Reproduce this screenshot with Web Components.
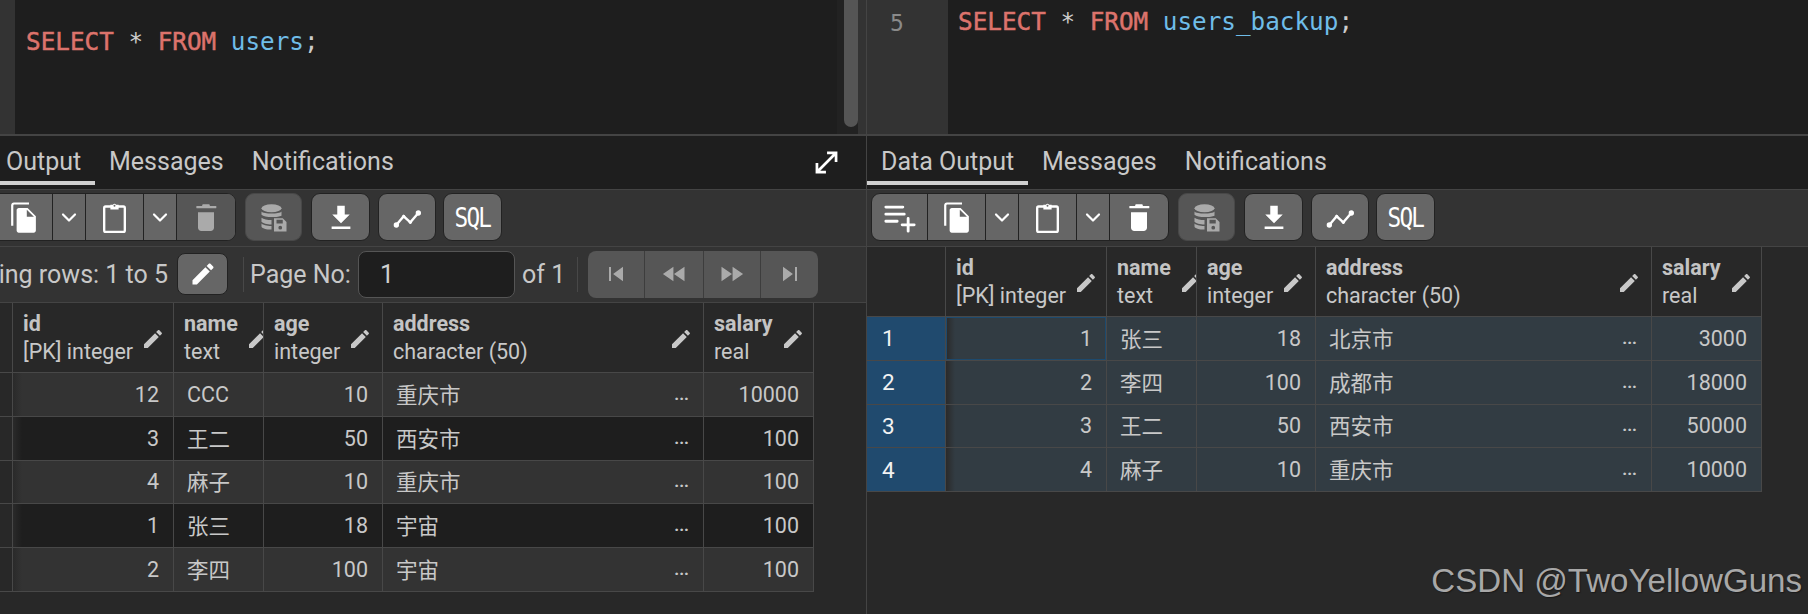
<!DOCTYPE html>
<html>
<head>
<meta charset="utf-8">
<style>
    html, body { margin: 0; padding: 0; height: 100%; background: #282828; overflow: hidden; }
    body { display: flex; font-family: Roboto, "Noto Sans CJK SC", sans-serif; color: #c8c8c8; }
</style>
</head>
<body>
<sql-panel id="left" style="--offset:-66px; width:866px">
    <sql-editor slot="editor" gutter="15" pad="11" top="26" scroller><span class="k">SELECT</span> * <span class="k">FROM</span> <span class="t">users</span>;</sql-editor>
    <result-tabs expand></result-tabs>
    <grid-toolbar></grid-toolbar>
    <pager-bar></pager-bar>
    <data-grid id="leftGrid"></data-grid>
</sql-panel>
<sql-panel id="right" style="--offset:0px; flex:1; border-left:1px solid #444">
    <sql-editor slot="editor" gutter="81" pad="10" top="6" line="5"><span class="k">SELECT</span> * <span class="k">FROM</span> <span class="t">users_backup</span>;</sql-editor>
    <result-tabs></result-tabs>
    <grid-toolbar></grid-toolbar>
    <data-grid id="rightGrid" selected></data-grid>
</sql-panel>
<water-mark>CSDN @TwoYellowGuns</water-mark>

<script>
const ICONS = {
    edit: '<path fill="currentColor" d="M3 17.25V21h3.75L17.81 9.94l-3.75-3.75L3 17.25zM20.71 7.04c.39-.39.39-1.02 0-1.41l-2.34-2.34c-.39-.39-1.02-.39-1.41 0l-1.83 1.83 3.75 3.75 1.83-1.83z"/>',
    addrow: '<g fill="none" stroke="currentColor" stroke-width="2" stroke-linecap="round"><path d="M2 5h12M2 10h13M2 15h8M13.5 17.5h8.5M17.75 13v9"/></g>',
    copy: '<path fill="currentColor" d="M16 1H5C3.9 1 3 1.9 3 3v15h1.6V3.2c0-.3.3-.6.6-.6H16V1zm-1 4l6 6v10.5c0 .9-.7 1.6-1.6 1.6H8.6C7.7 23.100 7 22.400 7 21.500V6.600C7 5.700 7.700 5 8.600 5H15zm-.6 1.400V11.500h5.200L14.400 6.400z"/>',
    paste: '<g fill="none" stroke="currentColor" stroke-width="1.700" stroke-linejoin="round"><rect x="4.500" y="4" width="15" height="18.500" rx="1"/></g><path fill="currentColor" d="M9 2.800h1.900a1.200 1.200 0 0 1 2.200 0H15v3.400H9z"/><circle cx="12" cy="3.500" r=".7" fill="#666"/>',
    chevron: '<path fill="none" stroke="currentColor" stroke-width="2.200" stroke-linecap="round" stroke-linejoin="round" d="M6 9.500l6 6 6-6"/>',
    trash: '<path fill="currentColor" d="M6 8.500h12V20c0 1.400-1.100 2.500-2.500 2.500h-7C7.100 22.500 6 21.400 6 20V8.500zM9.500 2.500h5l.5 1.300h4.500c.3 0 .5.900.1 1.700H4.900c-.3-.8-.2-1.700.1-1.700H9z"/>',
    dbsave: '<g fill="currentColor"><ellipse cx="10" cy="5" rx="8" ry="3.200"/><path d="M2 7.500c1.500 2.300 14.500 2.300 16 0V11c-2 .6-3.800 1-5.500 1-5 .3-9-.5-10.500-1.800zM2 12.500c1.500 1.200 5 1.900 8 1.900V18c-3.500-.1-7-1-8-2.200zM2 17.200c1 1 4 1.900 8 2v2.800c-4 0-8-1-8-2.500z"/><path fill-rule="evenodd" d="M12 13h7l3 3v7.500H12zM14 14.200v3h5v-3zM17 19a1.500 1.500 0 1 0 0 3 1.500 1.500 0 0 0 0-3z"/></g>',
    download: '<path fill="currentColor" d="M19 10h-4V3H9v7H5l7 7 7-7zM4.500 19.500v2h15v-2z"/>',
    graph: '<g fill="none" stroke="currentColor" stroke-width="1.800"><path d="M4 18l5.500-6.500 5 4.500 6-7"/></g><g fill="currentColor"><circle cx="4" cy="18" r="2"/><circle cx="9.500" cy="11.500" r="1.200"/><circle cx="14.500" cy="16" r="1.200"/><circle cx="20.500" cy="9" r="2"/></g>',
    first: '<path fill="currentColor" d="M6 6h1.700v12H6zm3.500 6l8.500 6.200V5.800z"/>',
    prev: '<path fill="currentColor" d="M11.500 18.200V5.800L2.500 12zm.5-6.200l9 6.200V5.800z"/>',
    next: '<path fill="currentColor" d="M3 18.200L12 12 3 5.800zm9.500-12.400v12.400l9-6.200z"/>',
    last: '<path fill="currentColor" d="M6 18.200L14.500 12 6 5.800zM16.300 6v12H18V6z"/>',
    expand: '<g fill="none" stroke="currentColor" stroke-width="2.400"><path d="M4.500 19.500l15-15M12.500 3.500h8v8M3.500 12.500v8h8"/></g>'
};

class PgIcon extends HTMLElement {
    constructor() {
        super();
        this.attachShadow({ mode: "open" });
    }
    connectedCallback() {
        const size = this.getAttribute("size") || 24;
        this.shadowRoot.innerHTML = `
            <style>
                :host { display: inline-flex; flex: none; width: ${size}px; height: ${size}px; }
                svg { width: 100%; height: 100%; display: block; }
            </style>
            <svg viewBox="0 0 24 24">${ICONS[this.getAttribute("name")]}</svg>`;
    }
}
customElements.define("pg-icon", PgIcon);

class SqlPanel extends HTMLElement {
    constructor() {
        super();
        this.attachShadow({ mode: "open" }).innerHTML = `
            <style>
                :host { display: flex; flex-direction: column; height: 100%; overflow: hidden; background: #282828; min-width: 0; box-sizing: content-box; }
                .inner { display: flex; flex-direction: column; margin-left: var(--offset); flex: 1; min-height: 0; }
            </style>
            <slot name="editor"></slot>
            <div class="inner"><slot></slot></div>`;
    }
}
customElements.define("sql-panel", SqlPanel);

class SqlEditor extends HTMLElement {
    constructor() {
        super();
        this.attachShadow({ mode: "open" });
    }
    connectedCallback() {
        const gutter = this.getAttribute("gutter");
        const line = this.getAttribute("line");
        const top = this.getAttribute("top");
        this.shadowRoot.innerHTML = `
            <style>
                :host { display: flex; height: 134px; border-bottom: 2px solid #444; background: #1e1e1e; flex: none; }
                .gutter { width: ${gutter}px; background: #333; flex: none; box-sizing: border-box; padding: ${top}px 0 0 ${line ? 23 : 0}px; color: #8a8a8a;
                    font: 23px/34px "DejaVu Sans Mono", monospace; }
                .code { flex: 1; padding: ${top - 1}px 0 0 ${this.getAttribute("pad")}px; font: 24.300px/34px "DejaVu Sans Mono", monospace; color: #ccc; white-space: pre; }
                ::slotted(.k) { color: #dc736c; -webkit-text-stroke: .5px #dc736c; }
                ::slotted(.t) { color: #6fbce8; }
                .track { width: 21px; background: #222; flex: none; position: relative; }
                .thumb { position: absolute; left: 7px; right: 0; top: 0; height: 127px; background: #555; border-radius: 0 0 7px 7px; }
                .side { width: 8px; background: #333; flex: none; }
            </style>
            <div class="gutter">${line || ""}</div>
            <div class="code"><slot></slot></div>
            ${this.hasAttribute("scroller") ? '<div class="track"><div class="thumb"></div></div><div class="side"></div>' : ""}`;
    }
}
customElements.define("sql-editor", SqlEditor);

class ResultTabs extends HTMLElement {
    constructor() {
        super();
        this.attachShadow({ mode: "open" });
    }
    connectedCallback() {
        this.shadowRoot.innerHTML = `
            <style>
                :host { display: flex; height: 54px; background: #1e1e1e; border-bottom: 1px solid #444; box-sizing: border-box; flex: none; color: #c8c8c8; font: 25px Roboto, sans-serif; padding-right: 26px; align-items: flex-start; }
                .tab { display: flex; align-items: center; padding: 6px 14px 0; height: 49px; box-sizing: border-box; border-bottom: 4px solid transparent; white-space: nowrap; flex: none; }
                .on { border-bottom-color: #d0d0d0; width: 161px; }
                pg-icon { margin: 13px 0 0 auto; color: #fff; }
            </style>
            <div class="tab on">Data Output</div>
            <div class="tab">Messages</div>
            <div class="tab">Notifications</div>
            ${this.hasAttribute("expand") ? '<pg-icon name="expand" size="27"></pg-icon>' : ""}`;
    }
}
customElements.define("result-tabs", ResultTabs);

class GridToolbar extends HTMLElement {
    constructor() {
        super();
        this.attachShadow({ mode: "open" }).innerHTML = `
            <style>
                :host { display: flex; height: 57px; box-sizing: border-box; padding: 3px 0 0 4px; background: #333; border-bottom: 1px solid #444; gap: 8px; flex: none; align-items: flex-start; }
                .group { display: flex; height: 48px; box-sizing: border-box; border: 1px solid #222; border-radius: 9px; overflow: hidden; background: #666; color: #fff; }
                .cell { height: 100%; display: flex; align-items: center; justify-content: center; box-sizing: border-box; border-right: 1px solid #222; }
                .cell:last-child { border-right: 0; }
                .off { background: #565656; border-color: #484848; color: #aaa; }
                .sql { font: 27px "DejaVu Sans Mono", monospace; letter-spacing: -2px; transform: scaleX(.84); }
            </style>
            <div class="group">
                <div class="cell" style="width:56px"><pg-icon name="addrow" size="34"></pg-icon></div>
                <div class="cell" style="width:58px"><pg-icon name="copy" size="33"></pg-icon></div>
                <div class="cell" style="width:33px"><pg-icon name="chevron" size="24"></pg-icon></div>
                <div class="cell" style="width:58px"><pg-icon name="paste" size="33"></pg-icon></div>
                <div class="cell" style="width:33px"><pg-icon name="chevron" size="24"></pg-icon></div>
                <div class="cell" style="width:58px"><pg-icon name="trash" size="32"></pg-icon></div>
            </div>
            <div class="group off" style="margin-left:1px"><div class="cell" style="width:55px"><pg-icon name="dbsave" size="30"></pg-icon></div></div>
            <div class="group" style="margin-left:1px"><div class="cell" style="width:57px"><pg-icon name="download" size="30"></pg-icon></div></div>
            <div class="group"><div class="cell" style="width:56px"><pg-icon name="graph" size="32"></pg-icon></div></div>
            <div class="group" style="margin-left:-1px"><div class="cell" style="width:57px"><span class="sql">SQL</span></div></div>`;
    }
    connectedCallback() {
        // left panel has nothing to delete yet, its bin is greyed out
        if (this.parentElement.id === "left") {
            const bin = this.shadowRoot.querySelector('pg-icon[name="trash"]').parentElement;
            bin.style.background = "#565656";
            bin.style.color = "#aaa";
        }
    }
}
customElements.define("grid-toolbar", GridToolbar);

class PagerBar extends HTMLElement {
    constructor() {
        super();
        this.attachShadow({ mode: "open" }).innerHTML = `
            <style>
                :host { display: flex; align-items: center; height: 56px; box-sizing: border-box; background: #333; border-bottom: 1px solid #444; flex: none; font: 25px Roboto, sans-serif; color: #c8c8c8; padding-left: 66px; padding-bottom: 1px; }
                .rows { width: 168px; display: flex; justify-content: flex-end; overflow: hidden; white-space: nowrap; flex: none; }
                .edit { width: 51px; height: 42px; margin-left: 9px; box-sizing: border-box; background: #666; border: 1px solid #222; border-radius: 8px; display: flex; align-items: center; justify-content: center; color: #fff; flex: none; }
                .sep { width: 1px; height: 35px; background: #484848; flex: none; }
                .page { width: 100px; flex: none; white-space: nowrap; }
                .input { width: 157px; height: 47px; margin: 0 8px; box-sizing: border-box; border: 1px solid #555; border-radius: 8px; background: #1e1e1e; padding-left: 21px; display: flex; align-items: center; color: #d0d0d0; flex: none; }
                .of { width: 40px; flex: none; white-space: nowrap; margin-left: -1px; }
                .nav { display: flex; height: 47px; border-radius: 8px; overflow: hidden; background: #565656; color: #aaa; margin-left: 10px; }
                .nav div { display: flex; align-items: center; justify-content: center; border-right: 1px solid #3d3d3d; box-sizing: border-box; }
                .nav div:last-child { border-right: 0; }
            </style>
            <div class="rows">Showing rows: 1 to 5</div>
            <div class="edit"><pg-icon name="edit" size="28"></pg-icon></div>
            <div class="sep" style="margin:0 6px 0 15px"></div>
            <span class="page">Page No:</span>
            <div class="input">1</div>
            <span class="of">of 1</span>
            <div class="sep" style="margin-left:15px"></div>
            <div class="nav">
                <div style="width:57px"><pg-icon name="first" size="28"></pg-icon></div>
                <div style="width:59px"><pg-icon name="prev" size="28"></pg-icon></div>
                <div style="width:57px"><pg-icon name="next" size="28"></pg-icon></div>
                <div style="width:57px"><pg-icon name="last" size="28"></pg-icon></div>
            </div>`;
    }
}
customElements.define("pager-bar", PagerBar);

class DataGrid extends HTMLElement {
    constructor() {
        super();
        this.attachShadow({ mode: "open" });
    }

    set data(data) {
        this._data = data;
        this.render();
    }

    render() {
        const { widths, rows } = this._data;
        const selected = this.hasAttribute("selected");
        const heads = [["id", "[PK] integer"], ["name", "text"], ["age", "integer"], ["address", "character (50)"], ["salary", "real"]];
        const head = heads.map(([name, type]) => `
            <div class="cell head">
                <div class="label"><b>${name}</b><span>${type}</span></div>
                <pg-icon name="edit" size="24"></pg-icon>
            </div>`).join("");
        // Chinese glyphs sit a pixel low next to Roboto digits
        const text = value => `<span class="${/[^\x00-\x7f]/.test(value) ? "cjk" : ""}">${value}</span>`;
        const body = rows.map((row, r) => {
            const tone = selected ? "sel" : r % 2 ? "dark" : "light";
            return `
            <div class="cell num ${selected ? "sel-num" : ""}">${r + 1}</div>
            <div class="cell ${tone} right first ${selected && r === 0 ? "focus" : ""}">${row[0]}</div>
            <div class="cell ${tone}">${text(row[1])}</div>
            <div class="cell ${tone} right">${row[2]}</div>
            <div class="cell ${tone} addr">${text(row[3])}<i>...</i></div>
            <div class="cell ${tone} right">${row[4]}</div>`;
        }).join("");
        this.shadowRoot.innerHTML = `
            <style>
                :host { display: block; flex: 1; background: #282828; font: 21.500px Roboto, "Noto Sans CJK SC", sans-serif; color: #c8c8c8; }
                .grid { display: grid; width: max-content; grid-template-columns: ${widths.map(w => w + "px").join(" ")}; grid-template-rows: 70px repeat(${rows.length}, 43.750px); }
                .cell { box-sizing: border-box; border-right: 1px solid #484848; border-bottom: 1px solid #484848; padding: 0 14px 0 13px; display: flex; align-items: center; overflow: hidden; white-space: nowrap; }
                .corner { background: #282828; }
                .head { padding: 0 0 0 10px; gap: 8px; justify-content: space-between; }
                .head pg-icon { margin-right: 13px; color: #c8c8c8; margin-top: 2px; }
                .head:nth-child(5) pg-icon { margin-right: 10px; }
                .label { display: flex; flex-direction: column; line-height: 27.500px; flex: none; }
                .label b { font-weight: 700; color: #c4c4c4; }
                .right { justify-content: flex-end; }
                .light { background-color: #333; }
                .dark { background-color: #1e1e1e; }
                .sel { background-color: #323c43; }
                .first { background-image: linear-gradient(90deg, #2a2a2a, transparent 9px); }
                .num { color: #f2f2f2; padding-left: 15px; font-size: 22.500px; }
                .sel-num { background: #204a6e; }
                .focus { box-shadow: inset 0 0 0 1px #1d4a6e; }
                .addr { justify-content: space-between; }
                .addr i { font-style: normal; font-weight: 700; font-size: 17px; line-height: 1; }
                .cjk { margin-bottom: 2px; }
            </style>
            <div class="grid">
                <div class="cell corner"></div>${head}${body}
            </div>`;
    }
}
customElements.define("data-grid", DataGrid);

class WaterMark extends HTMLElement {
    constructor() {
        super();
        this.attachShadow({ mode: "open" }).innerHTML = `
            <style>
                :host { position: absolute; right: 6px; top: 562px; font: 33.100px "Liberation Sans", sans-serif; color: #a8a8a8; text-shadow: 1px 1px 1px #1a1a1a; white-space: nowrap; }
            </style>
            <slot></slot>`;
    }
}
customElements.define("water-mark", WaterMark);

document.getElementById("leftGrid").data = {
    widths: [79, 161, 90, 119, 321, 110],
    rows: [
        [12, "CCC", 10, "重庆市", 10000],
        [3, "王二", 50, "西安市", 100],
        [4, "麻子", 10, "重庆市", 100],
        [1, "张三", 18, "宇宙", 100],
        [2, "李四", 100, "宇宙", 100]
    ]
};
document.getElementById("rightGrid").data = {
    widths: [79, 161, 90, 119, 336, 110],
    rows: [
        [1, "张三", 18, "北京市", 3000],
        [2, "李四", 100, "成都市", 18000],
        [3, "王二", 50, "西安市", 50000],
        [4, "麻子", 10, "重庆市", 10000]
    ]
};
</script>
</body>
</html>
